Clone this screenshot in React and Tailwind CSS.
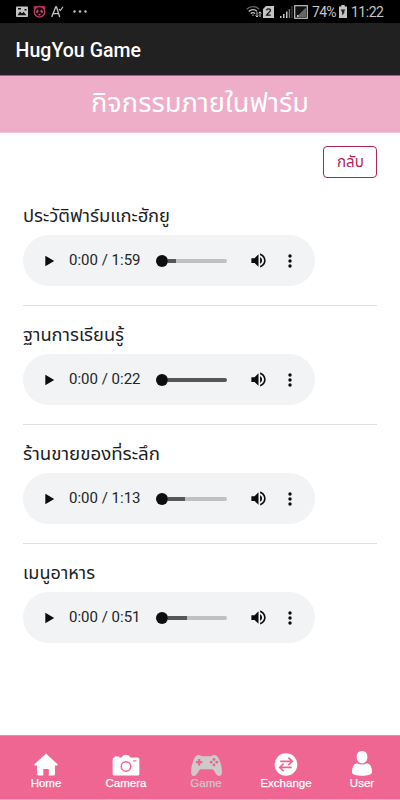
const tracks = [
  { title: 'ประวัติฟาร์มแกะฮักยู', length: '1:59', buffered: 13, width: 147 },
  { title: 'ฐานการเรียนรู้', length: '0:22', buffered: 100, width: 101 },
  { title: 'ร้านขายของที่ระลึก', length: '1:13', buffered: 28, width: 137 },
  { title: 'เมนูอาหาร', length: '0:51', buffered: 33, width: 72 },
]

// svg text so that Thai labels keep their width whichever font is installed
function ThaiText({ children, size, width, height, baseline, className }) {
  return (
    <svg width={width} height={height} className={`block overflow-visible ${className}`}>
      <text
        x="0"
        y={baseline}
        fontSize={size}
        textLength={width}
        lengthAdjust="spacingAndGlyphs"
        fill="currentColor"
      >
        {children}
      </text>
    </svg>
  )
}

function StatusBar() {
  return (
    <div className="h-[23px] bg-black flex items-center pl-4 pr-[17px] text-[#c4c4c4]">
      <svg width="12" height="12" viewBox="0 0 12 12">
        <rect x="0" y="0.5" width="12" height="10.5" rx="1" fill="currentColor" />
        <path d="M1.5 9.2 4 5.5l2 2 1.5-1.7 3 3.4z" fill="#111" />
        <path d="M2 2h3v1.6H2zM8.5 3h2v1.5h-2z" fill="#111" />
      </svg>
      <svg width="13" height="13" viewBox="0 0 13 13" className="ml-[5px]">
        <circle cx="2.4" cy="2.8" r="2" fill="#9e3157" />
        <circle cx="10.6" cy="2.8" r="2" fill="#9e3157" />
        <circle cx="6.5" cy="6.8" r="5.3" fill="#1c070e" stroke="#b93d65" strokeWidth="1.3" />
        <path d="M2.7 6.8 5 4.5l.7 1.8-1.6 2zM10.3 6.8 8 4.5l-.7 1.8 1.6 2z" fill="#d04a76" />
        <path d="M5 9h3l-1.5 1.8z" fill="#d04a76" />
      </svg>
      <svg width="13" height="12" viewBox="0 0 13 12" className="ml-[5px]" fill="none" stroke="currentColor" strokeWidth="1.3">
        <path d="M.7 11 4.7 1h.8l3.2 10M2 7.7h5.5" />
        <path d="m8 3 1.3 1.5L12 .8" strokeWidth="1.1" />
      </svg>
      <svg width="14" height="3" viewBox="0 0 14 3" className="ml-[9px]" fill="currentColor">
        <circle cx="1.5" cy="1.5" r="1.2" />
        <circle cx="7" cy="1.5" r="1.2" />
        <circle cx="12.5" cy="1.5" r="1.2" />
      </svg>

      <svg width="16" height="13" viewBox="0 0 16 13" className="ml-auto" fill="none" stroke="currentColor" strokeWidth="1.4">
        <path d="M.8 4.2C4 .7 9.8.7 13 4.2" stroke="#666" />
        <path d="M2.8 6.4c2.3-2.4 6-2.4 8.2 0M4.8 8.6c1.2-1.3 3-1.3 4.2 0" />
        <path d="M6 9.7h2L7 11.3z" fill="currentColor" stroke="none" />
        <path d="M11 7v5M9.5 10.5 11 12l1.3-1.5M14 12V7M12.7 8.3 14 6.8l1.3 1.5" strokeWidth="1" />
      </svg>
      <svg width="11" height="12" viewBox="0 0 11 12" className="ml-[1px]">
        <path d="M3 0h8v12H0V3z" fill="currentColor" />
        <path d="M3.5 4.3c.3-2 4-2 4 0 0 1.6-3 2.8-4 4.9h4.2" fill="none" stroke="#111" strokeWidth="1.3" />
      </svg>
      <svg width="13" height="13" viewBox="0 0 13 13" className="ml-[6px]" fill="currentColor">
        <path d="M0 11h1.5v2H0zM3 9h1.5v4H3zM6 6.5h1.5V13H6z" />
        <path d="M8.7 4h1.4v9H8.7z" fill="#777" />
        <path d="M11.3 1h1.3v12h-1.3z" fill="#444" />
      </svg>
      <svg width="14" height="14" viewBox="0 0 14 14" className="ml-[1px]">
        <rect x=".7" y=".7" width="12.6" height="12.6" fill="#111" stroke="currentColor" strokeWidth="1.2" />
        <path d="M12 2.5V12H2.5z" fill="#666" />
        <path d="M3 10h1.5v2H3z" fill="currentColor" />
      </svg>
      <span className="ml-1 w-[24px] text-[14px] leading-none tracking-[-0.7px]">74%</span>
      <svg width="8" height="13" viewBox="0 0 8 13" className="ml-[3px]">
        <path d="M2.3 0h3.4v1.5H8V13H0V1.5h2.3z" fill="currentColor" />
        <path d="M1.8 4.5h4.5L4.8 7.2h1L3.2 10.5V7.5z" fill="#222" />
      </svg>
      <span className="ml-1 w-[32px] text-[14px] leading-none tracking-[-0.5px]">11:22</span>
    </div>
  )
}

function AudioPlayer({ length, buffered }) {
  return (
    <div className="w-[292px] h-[51px] rounded-full bg-[#f1f3f4] flex items-center pl-[22px] text-[#0c0c0e]">
      <svg width="10" height="12" viewBox="0 0 10 12" fill="currentColor">
        <path d="M.3.8 9.2 6 .3 11.2z" />
      </svg>
      <span className="ml-[14px] w-[87px] text-[15px] leading-none whitespace-nowrap text-[#252527]">
        0:00 / {length}
      </span>
      <div className="flex items-center w-[71px]">
        <div className="size-[12px] rounded-full bg-[#0e0e10] shrink-0" />
        <div className="h-[4px] flex-1 bg-[#bfc0c1] rounded-r-full overflow-hidden">
          <div className="h-full bg-[#565658]" style={{ width: `${buffered}%` }} />
        </div>
      </div>
      <svg width="19" height="19" viewBox="0 0 24 24" className="ml-[22px]" fill="currentColor">
        <path d="M3 9v6h4l5 5V4L7 9H3zm13.5 3c0-1.77-1.02-3.29-2.5-4.03v8.05c1.48-.73 2.5-2.25 2.5-4.02zM14 3.23v2.06c2.89.86 5 3.54 5 6.71s-2.11 5.85-5 6.71v2.06c4.01-.91 7-4.49 7-8.77s-2.99-7.86-7-8.77z" />
      </svg>
      <svg width="4" height="14" viewBox="0 0 4 14" className="ml-[20px]" fill="currentColor">
        <circle cx="2" cy="2" r="1.7" />
        <circle cx="2" cy="7" r="1.7" />
        <circle cx="2" cy="12" r="1.7" />
      </svg>
    </div>
  )
}

function HomeIcon() {
  return (
    <svg width="24" height="23" viewBox="0 0 24 23" fill="currentColor">
      <path d="M12 .5 23.6 11.3q.4 1.2-1 1.2H21V21q0 1.5-1.5 1.5h-4.7v-6.6H9.3v6.6H4.5Q3 22.5 3 21v-8.5H1.4q-1.4 0-1-1.2z" />
    </svg>
  )
}

function CameraIcon() {
  return (
    <svg width="28" height="21" viewBox="0 0 28 22">
      <path d="M2 2.5v-1h5v1h2.5L11 .5q.3-.5 1-.5h4q.7 0 1 .5l1.5 2H26q2 0 2 2V20q0 1.500-1.500 1.500h-25Q0 21.500 0 20V4.500q0-2 2-2z" fill="currentColor" />
      <circle cx="14" cy="12" r="5" fill="none" stroke="#f06693" strokeWidth="1.5" />
      <path d="M21.5 5.500H25v1.200h-3.500z" fill="#f06693" />
    </svg>
  )
}

function GameIcon() {
  return (
    <svg width="31" height="21" viewBox="0 0 31 21">
      <path d="M7.5 0c2 0 2.500 1.200 4 1.200h8C21 1.200 21.500 0 23.500 0 28 0 31 11 31 17c0 2.500-1 4-3 4-3 0-4.500-6.800-7-6.800H10C7.500 14.200 6 21 3 21c-2 0-3-1.500-3-4C0 11 3 0 7.500 0z" fill="currentColor" />
      <path d="M8.2 4v6.400M5 7.200h6.400" stroke="#e2698f" strokeWidth="2.2" />
      <g fill="#e2698f">
        <circle cx="23" cy="4.5" r="1.4" />
        <circle cx="20.2" cy="7.2" r="1.4" />
        <circle cx="25.8" cy="7.2" r="1.4" />
        <circle cx="23" cy="10" r="1.4" />
      </g>
    </svg>
  )
}

function ExchangeIcon() {
  return (
    <svg width="24" height="23" viewBox="0 0 24 24">
      <circle cx="12" cy="12" r="11.8" fill="currentColor" />
      <path d="M6 8.700h12M14.500 4.800l4 3.900-4 3.900M18 15H6M9.500 11.100l-4 3.900 4 3.900" fill="none" stroke="#f06693" strokeWidth="1.7" />
    </svg>
  )
}

function UserIcon() {
  return (
    <svg width="20" height="25" viewBox="0 0 20 25" fill="currentColor">
      <path d="M10 0c3.500 0 5.400 2.300 5.400 6 0 3.700-2.200 6.300-5.400 6.300S4.600 9.700 4.600 6c0-3.700 1.900-6 5.400-6z" />
      <path d="M5 12.300c3 1.700 7 1.700 10 0 3.500.7 5 4 5 9.200 0 2-5 3.300-10 3.300S0 23.500 0 21.500c0-5.200 1.500-8.500 5-9.200z" />
    </svg>
  )
}

const tabs = [
  { label: 'Home', icon: HomeIcon },
  { label: 'Camera', icon: CameraIcon },
  { label: 'Game', icon: GameIcon, active: true },
  { label: 'Exchange', icon: ExchangeIcon },
  { label: 'User', icon: UserIcon },
]

export default function App() {
  return (
    <div className="w-[400px] h-[800px] bg-white overflow-hidden flex flex-col font-[Roboto,'Noto_Sans_Thai',sans-serif]">
      <StatusBar />
      <header className="h-[52px] shrink-0 bg-[#212121] px-[15.5px] flex items-center pt-[3px]">
        <h1 className="text-white text-[19.5px] font-medium leading-none tracking-[0.05px]">HugYou Game</h1>
      </header>
      <div className="h-[58px] shrink-0 bg-[#eeaec7] border-t border-t-[#8b707c] border-b border-b-[#f0c5d6] flex justify-center">
        <ThaiText size={26.5} width={218} height={55} baseline={36} className="text-white">
          กิจกรรมภายในฟาร์ม
        </ThaiText>
      </div>

      <main className="flex-1 px-[23px] pt-[13px]">
        <div className="flex justify-end h-[41px]">
          <button className="w-[54px] h-8 border border-[#ad2457] rounded-[4px] flex justify-center">
            <ThaiText size={15} width={27} height={30} baseline={19.5} className="text-[#b51f5b]">
              กลับ
            </ThaiText>
          </button>
        </div>
        {tracks.map((t) => (
          <section key={t.title} className="h-[119px] border-b border-[#dedede] last:border-b-0">
            <ThaiText size={17} width={t.width} height={48} baseline={35} className="text-[#1c1e26]">
              {t.title}
            </ThaiText>
            <AudioPlayer length={t.length} buffered={t.buffered} />
          </section>
        ))}
      </main>

      <nav className="h-[65px] shrink-0 bg-[#f06693] border-t border-t-[#ea8eac] border-b border-b-[#f5a5c0] px-[6px] grid grid-cols-[80px_80px_80px_80px_72px]">
        {tabs.map(({ label, icon: Icon, active }) => (
          <div
            key={label}
            className={`flex flex-col items-center justify-end pb-[9px] ${active ? 'text-[#cfc9cb]' : 'text-white'}`}
          >
            <Icon />
            <span className="text-[11.5px] leading-[14px] font-['Liberation_Sans',sans-serif] [-webkit-text-stroke:0.25px_currentColor]">
              {label}
            </span>
          </div>
        ))}
      </nav>
    </div>
  )
}
